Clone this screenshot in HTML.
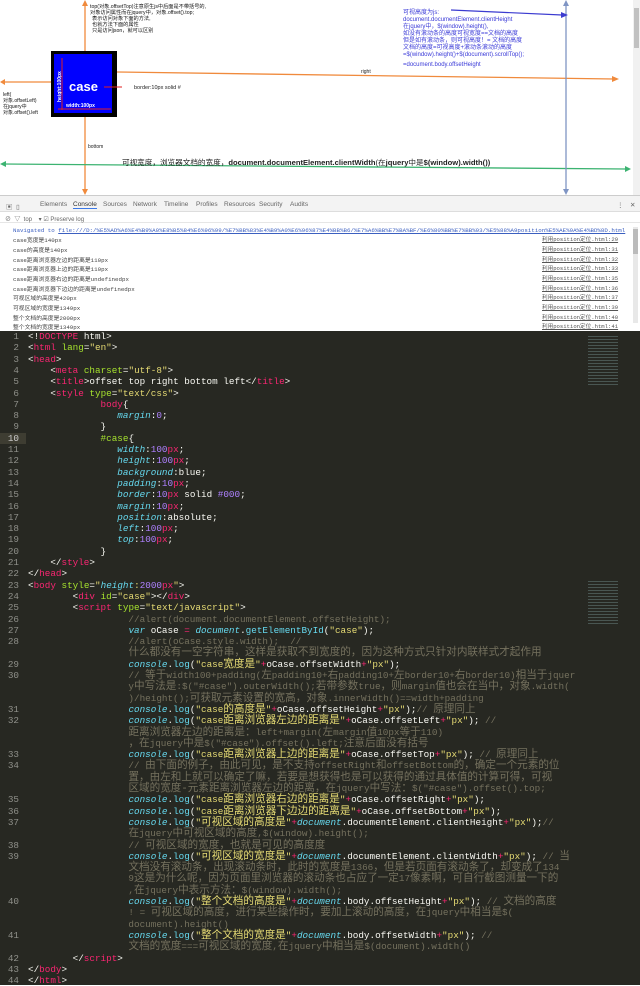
<!DOCTYPE html>
<html><head><meta charset="utf-8">
<style>
*{margin:0;padding:0;box-sizing:border-box}
body{width:640px;height:985px;overflow:hidden;background:#fff;font-family:"Liberation Sans","Noto Sans CJK SC",sans-serif;position:relative}
#top{position:absolute;left:0;top:0;width:640px;height:195px;background:#fff}
#dt{position:absolute;left:0;top:195px;width:640px;height:136px;background:#fff}
.tabs{height:17px;background:#f3f3f3;border-top:1px solid #ccc;border-bottom:1px solid #ddd;font-size:6.5px;color:#666;position:relative}
.tabs span{position:absolute;top:5px}
.filt{height:11px;border-bottom:1px solid #e6e6e6;font-size:6px;color:#666;position:relative}
.row{position:absolute;left:13px;font-family:"Liberation Mono","Noto Sans CJK SC",monospace;font-size:5.8px;color:#444;white-space:nowrap}
.lnk{position:absolute;left:542px;font-family:"Liberation Mono","Noto Sans CJK SC",monospace;font-size:5.6px;color:#555;text-decoration:underline;white-space:nowrap}
#ed{position:absolute;left:0;top:331px;width:640px;height:654px;background:#272822;font-family:"Liberation Mono","Noto Sans CJK SC",monospace;font-size:9.3px;color:#f8f8f2}
.l{position:absolute;left:0;height:11.3px;line-height:11.3px;white-space:pre;width:640px}
.n{position:absolute;left:0;width:19px;text-align:right;color:#8f908a}
.c{position:absolute;left:28px}
.z{font-size:10.6px}
.t{color:#f92672}.a{color:#a6e22e}.s{color:#e6db74}.m{color:#ae81ff}.p{color:#66d9ef;font-style:italic}.g{color:#75715e}.f{color:#66d9ef}
</style></head><body>
<div id="top">
<svg width="640" height="195" xmlns="http://www.w3.org/2000/svg">
<rect x="633" y="0" width="7" height="195" fill="#f1f1f1"/><rect x="634" y="8" width="5" height="40" fill="#c1c1c1"/>
<line x1="85" y1="2" x2="85" y2="193" stroke="#f08a3c" stroke-width="1.3"/>
<polygon points="82,6 88,6 85,0" fill="#f08a3c"/><polygon points="82,189 88,189 85,195" fill="#f08a3c"/>
<line x1="3" y1="82" x2="51" y2="82" stroke="#f08a3c" stroke-width="1.3"/><polygon points="0,82 5,79 5,85" fill="#f08a3c"/>
<line x1="117" y1="72" x2="614" y2="79" stroke="#f08a3c" stroke-width="1.3"/><polygon points="619,79 612,76 612,82" fill="#f08a3c"/>
<line x1="3" y1="164" x2="626" y2="169" stroke="#3cb371" stroke-width="1.3"/><polygon points="0,164 6,161 6,167" fill="#3cb371"/><polygon points="631,169 625,166 625,172" fill="#3cb371"/>
<line x1="566" y1="2" x2="566" y2="193" stroke="#7f95c4" stroke-width="1.3"/><polygon points="563,6 569,6 566,0" fill="#7f95c4"/><polygon points="563,189 569,189 566,195" fill="#7f95c4"/>
<line x1="451" y1="10" x2="562" y2="15" stroke="#3b3bd0" stroke-width="1.2"/><polygon points="568,15 561,12 561,18" fill="#3b3bd0"/>
<rect x="51" y="51" width="66" height="66" fill="#000"/><rect x="54" y="54" width="58" height="59" fill="#0000ff"/>
<text x="69" y="91" fill="#fff" font-size="13" font-weight="bold">case</text>
<text x="66" y="107" fill="#fff" font-size="5" font-weight="bold">width:100px</text>
<text x="61" y="102" fill="#fff" font-size="5" font-weight="bold" transform="rotate(-90 61 102)">height:100px</text>
<line x1="58" y1="109" x2="111" y2="109" stroke="#e02020" stroke-width="1"/><line x1="62" y1="58" x2="62" y2="110" stroke="#e02020" stroke-width="1"/>
<line x1="104" y1="87" x2="122" y2="87" stroke="#e02020" stroke-width="1"/>
<text x="134" y="89" fill="#222" font-size="5.5">border:10px solid #</text>
<text x="361" y="73" fill="#222" font-size="5">right</text>
<text x="88" y="148" fill="#222" font-size="5">bottom</text>
<g fill="#111" font-size="5"><text x="3" y="96">left(</text><text x="3" y="102">对象.offsetLeft)</text><text x="3" y="108">在jquery中</text><text x="3" y="114">对象.offset().left</text></g>
<g fill="#111" font-size="5.2"><text x="90" y="8">top(对象.offsetTop)注意原生js中后面是不带括号的,</text><text x="90" y="14">对象访问属性而在jquery中，对象.offset().top;</text><text x="92" y="20">表示访问对象下面的方法,</text><text x="92" y="26">也就方法下面的属性</text><text x="92" y="32">只是访问json，就可以区别</text></g>
<text x="122" y="165" fill="#222" font-size="7.6">可视宽度，浏览器文档的宽度，<tspan font-weight="bold">document.documentElement.clientWidth</tspan>(在<tspan font-weight="bold">jquery</tspan>中是<tspan font-weight="bold">$(window).width())</tspan></text>
<g fill="#3a3ad8" font-size="6"><text x="403" y="14">可视高度为js:</text><text x="403" y="21">document.documentElement.clientHeight</text><text x="403" y="28">在jquery中，$(window).height(),</text><text x="403" y="35">如没有滚动条的高度可视宽度==文档的高度</text><text x="403" y="42">但是如有滚动条，则可视高度！= 文档的高度</text><text x="403" y="49">文档的高度=可视高度+滚动条滚动的高度</text><text x="403" y="56">=$(window).height()+$(document).scrollTop();</text><text x="403" y="66">=document.body.offsetHeight</text></g>
</svg></div>
<div id="dt">
<div class="tabs"><span style="left:6px">▣ &nbsp;▯</span><span style="left:40px">Elements</span><span style="left:73px;color:#333;border-bottom:1px solid #3b78e7">Console</span><span style="left:103px">Sources</span><span style="left:133px">Network</span><span style="left:164px">Timeline</span><span style="left:196px">Profiles</span><span style="left:224px">Resources</span><span style="left:259px">Security</span><span style="left:290px">Audits</span><span style="left:617px">⋮</span><span style="left:630px">✕</span></div>
<div class="filt"><span style="position:absolute;left:5px;top:2px">⊘ &nbsp;▽ &nbsp;top &nbsp;&nbsp;&nbsp;▾ ☑ Preserve log</span></div>
<div class="row" style="top:32px;color:#3b5fc0">Navigated to <u>file:///D:/%E5%AD%A6%E4%B9%A0%E8%B5%84%E6%96%99/%E7%BB%83%E4%B9%A0%E6%96%87%E4%BB%B6/%E7%A6%BB%E7%BA%BF/%E6%80%BB%E7%BB%93/%E5%88%A9position%E5%AE%9A%E4%BD%8D.html</u></div>
<div class="row" style="top:40px">case宽度是140px</div><div class="lnk" style="top:40px">利用position定位.html:29</div>
<div class="row" style="top:50px">case的高度是140px</div><div class="lnk" style="top:50px">利用position定位.html:31</div>
<div class="row" style="top:60px">case距离浏览器左边的距离是110px</div><div class="lnk" style="top:60px">利用position定位.html:32</div>
<div class="row" style="top:69px">case距离浏览器上边的距离是110px</div><div class="lnk" style="top:69px">利用position定位.html:33</div>
<div class="row" style="top:79px">case距离浏览器右边的距离是undefinedpx</div><div class="lnk" style="top:79px">利用position定位.html:35</div>
<div class="row" style="top:89px">case距离浏览器下边边的距离是undefinedpx</div><div class="lnk" style="top:89px">利用position定位.html:36</div>
<div class="row" style="top:98px">可视区域的高度是420px</div><div class="lnk" style="top:98px">利用position定位.html:37</div>
<div class="row" style="top:108px">可视区域的宽度是1349px</div><div class="lnk" style="top:108px">利用position定位.html:39</div>
<div class="row" style="top:118px">整个文档的高度是2000px</div><div class="lnk" style="top:118px">利用position定位.html:40</div>
<div class="row" style="top:127px">整个文档的宽度是1349px</div><div class="lnk" style="top:127px">利用position定位.html:41</div>
<div style="position:absolute;left:633px;top:32px;width:5px;height:96px;background:#e8e8e8"></div><div style="position:absolute;left:633px;top:34px;width:5px;height:25px;background:#bbb"></div>
</div>
<div id="ed">
<div class="l" style="top:0px"><span class="n">1</span><span class="c">&lt;!<span class="t">DOCTYPE</span> html&gt;</span></div>
<div class="l" style="top:11.3px"><span class="n">2</span><span class="c">&lt;<span class="t">html</span> <span class="a">lang</span>=<span class="s">"en"</span>&gt;</span></div>
<div class="l" style="top:22.6px"><span class="n">3</span><span class="c">&lt;<span class="t">head</span>&gt;</span></div>
<div class="l" style="top:33.9px"><span class="n">4</span><span class="c">    &lt;<span class="t">meta</span> <span class="a">charset</span>=<span class="s">"utf-8"</span>&gt;</span></div>
<div class="l" style="top:45.2px"><span class="n">5</span><span class="c">    &lt;<span class="t">title</span>&gt;offset top right bottom left&lt;/<span class="t">title</span>&gt;</span></div>
<div class="l" style="top:56.5px"><span class="n">6</span><span class="c">    &lt;<span class="t">style</span> <span class="a">type</span>=<span class="s">"text/css"</span>&gt;</span></div>
<div class="l" style="top:67.8px"><span class="n">7</span><span class="c">             <span class="t">body</span>{</span></div>
<div class="l" style="top:79.1px"><span class="n">8</span><span class="c">                <span class="p">margin</span>:<span class="m">0</span>;</span></div>
<div class="l" style="top:90.4px"><span class="n">9</span><span class="c">             }</span></div>
<div class="l" style="top:101.7px;background:linear-gradient(90deg,#3e3d32 0,#3e3d32 26px,transparent 26px)"><span class="n" style="color:#ccc">10</span><span class="c">             <span class="a">#case</span>{</span></div>
<div class="l" style="top:113px"><span class="n">11</span><span class="c">                <span class="p">width</span>:<span class="m">100</span><span class="t">px</span>;</span></div>
<div class="l" style="top:124.3px"><span class="n">12</span><span class="c">                <span class="p">height</span>:<span class="m">100</span><span class="t">px</span>;</span></div>
<div class="l" style="top:135.6px"><span class="n">13</span><span class="c">                <span class="p">background</span>:blue;</span></div>
<div class="l" style="top:146.9px"><span class="n">14</span><span class="c">                <span class="p">padding</span>:<span class="m">10</span><span class="t">px</span>;</span></div>
<div class="l" style="top:158.2px"><span class="n">15</span><span class="c">                <span class="p">border</span>:<span class="m">10</span><span class="t">px</span> solid <span class="m">#000</span>;</span></div>
<div class="l" style="top:169.5px"><span class="n">16</span><span class="c">                <span class="p">margin</span>:<span class="m">10</span><span class="t">px</span>;</span></div>
<div class="l" style="top:180.8px"><span class="n">17</span><span class="c">                <span class="p">position</span>:absolute;</span></div>
<div class="l" style="top:192.1px"><span class="n">18</span><span class="c">                <span class="p">left</span>:<span class="m">100</span><span class="t">px</span>;</span></div>
<div class="l" style="top:203.4px"><span class="n">19</span><span class="c">                <span class="p">top</span>:<span class="m">100</span><span class="t">px</span>;</span></div>
<div class="l" style="top:214.7px"><span class="n">20</span><span class="c">             }</span></div>
<div class="l" style="top:226px"><span class="n">21</span><span class="c">    &lt;/<span class="t">style</span>&gt;</span></div>
<div class="l" style="top:237.3px"><span class="n">22</span><span class="c">&lt;/<span class="t">head</span>&gt;</span></div>
<div class="l" style="top:248.6px"><span class="n">23</span><span class="c">&lt;<span class="t">body</span> <span class="a">style</span>=<span class="s">"<span class="p">height</span>:<span class="m">2000</span><span class="t">px</span>"</span>&gt;</span></div>
<div class="l" style="top:259.9px"><span class="n">24</span><span class="c">        &lt;<span class="t">div</span> <span class="a">id</span>=<span class="s">"case"</span>&gt;&lt;/<span class="t">div</span>&gt;</span></div>
<div class="l" style="top:271.2px"><span class="n">25</span><span class="c">        &lt;<span class="t">script</span> <span class="a">type</span>=<span class="s">"text/javascript"</span>&gt;</span></div>
<div class="l" style="top:282.5px"><span class="n">26</span><span class="c g">                  //alert(document.documentElement.offsetHeight);</span></div>
<div class="l" style="top:293.8px"><span class="n">27</span><span class="c">                  <span class="p">var</span> oCase <span class="t">=</span> <span class="p">document</span>.<span class="f">getElementById</span>(<span class="s">"case"</span>);</span></div>
<div class="l" style="top:305.1px"><span class="n">28</span><span class="c g">                  //alert(oCase.style.width);  //</span></div>
<div class="l" style="top:316.4px"><span class="c g">                  <span class="z">什么都没有一空字符串，这样是获取不到宽度的，因为这种方式只针对内联样式才起作用</span></span></div>
<div class="l" style="top:327.7px"><span class="n">29</span><span class="c">                  <span class="p">console</span>.<span class="f">log</span>(<span class="s">"case<span class="z">宽度是</span>"</span><span class="t">+</span>oCase.offsetWidth<span class="t">+</span><span class="s">"px"</span>);</span></div>
<div class="l" style="top:339px"><span class="n">30</span><span class="c g">                  // <span class="z">等于</span>width100+padding(<span class="z">左</span>padding10+<span class="z">右</span>padding10+<span class="z">左</span>border10+<span class="z">右</span>border10)<span class="z">相当于</span>jquer</span></div>
<div class="l" style="top:350.3px"><span class="c g">                  y<span class="z">中写法是</span>:$("#case").outerWidth();<span class="z">若带参数</span>true<span class="z">，则</span>margin<span class="z">值也会在当中，对象</span>.width(</span></div>
<div class="l" style="top:361.6px"><span class="c g">                  )/height();<span class="z">可获取元素设置的宽高，对象</span>.innerWidth()==width+padding</span></div>
<div class="l" style="top:372.9px"><span class="n">31</span><span class="c">                  <span class="p">console</span>.<span class="f">log</span>(<span class="s">"case<span class="z">的高度是</span>"</span><span class="t">+</span>oCase.offsetHeight<span class="t">+</span><span class="s">"px"</span>);<span class="g">// <span class="z">原理同上</span></span></span></div>
<div class="l" style="top:384.2px"><span class="n">32</span><span class="c">                  <span class="p">console</span>.<span class="f">log</span>(<span class="s">"case<span class="z">距离浏览器左边的距离是</span>"</span><span class="t">+</span>oCase.offsetLeft<span class="t">+</span><span class="s">"px"</span>); <span class="g">//</span></span></div>
<div class="l" style="top:395.5px"><span class="c g">                  <span class="z">距离浏览器左边的距离是：</span>left+margin(<span class="z">左</span>margin<span class="z">值</span>10px<span class="z">等于</span>110)</span></div>
<div class="l" style="top:406.8px"><span class="c g">                  <span class="z">，在</span>jquery<span class="z">中是</span>$("#case").offset().left;<span class="z">注意后面没有括号</span></span></div>
<div class="l" style="top:418.1px"><span class="n">33</span><span class="c">                  <span class="p">console</span>.<span class="f">log</span>(<span class="s">"case<span class="z">距离浏览器上边的距离是</span>"</span><span class="t">+</span>oCase.offsetTop<span class="t">+</span><span class="s">"px"</span>); <span class="g">// <span class="z">原理同上</span></span></span></div>
<div class="l" style="top:429.4px"><span class="n">34</span><span class="c g">                  // <span class="z">由下面的例子，由此可见，是不支持</span>offsetRight<span class="z">和</span>offsetBottom<span class="z">的，确定一个元素的位</span></span></div>
<div class="l" style="top:440.7px"><span class="c g">                  <span class="z">置，由左和上就可以确定了嘛，若要是想获得也是可以获得的通过具体值的计算可得，可视</span></span></div>
<div class="l" style="top:452px"><span class="c g">                  <span class="z">区域的宽度-元素距离浏览器左边的距离，在</span>jquery<span class="z">中写法：</span>$("#case").offset().top;</span></div>
<div class="l" style="top:463.3px"><span class="n">35</span><span class="c">                  <span class="p">console</span>.<span class="f">log</span>(<span class="s">"case<span class="z">距离浏览器右边的距离是</span>"</span><span class="t">+</span>oCase.offsetRight<span class="t">+</span><span class="s">"px"</span>);</span></div>
<div class="l" style="top:474.6px"><span class="n">36</span><span class="c">                  <span class="p">console</span>.<span class="f">log</span>(<span class="s">"case<span class="z">距离浏览器下边边的距离是</span>"</span><span class="t">+</span>oCase.offsetBottom<span class="t">+</span><span class="s">"px"</span>);</span></div>
<div class="l" style="top:485.9px"><span class="n">37</span><span class="c">                  <span class="p">console</span>.<span class="f">log</span>(<span class="s">"<span class="z">可视区域的高度是</span>"</span><span class="t">+</span><span class="p">document</span>.documentElement.clientHeight<span class="t">+</span><span class="s">"px"</span>);<span class="g">//</span></span></div>
<div class="l" style="top:497.2px"><span class="c g">                  <span class="z">在</span>jquery<span class="z">中可视区域的高度</span>,$(window).height();</span></div>
<div class="l" style="top:508.5px"><span class="n">38</span><span class="c g">                  // <span class="z">可视区域的宽度，也就是可见的高度度</span></span></div>
<div class="l" style="top:519.8px"><span class="n">39</span><span class="c">                  <span class="p">console</span>.<span class="f">log</span>(<span class="s">"<span class="z">可视区域的宽度是</span>"</span><span class="t">+</span><span class="p">document</span>.documentElement.clientWidth<span class="t">+</span><span class="s">"px"</span>); <span class="g">// <span class="z">当</span></span></span></div>
<div class="l" style="top:531.1px"><span class="c g">                  <span class="z">文档没有滚动条，出现滚动条时，此时的宽度是</span>1366<span class="z">，但是若页面有滚动条了，却变成了</span>134</span></div>
<div class="l" style="top:542.4px"><span class="c g">                  9<span class="z">这是为什么呢，因为页面里浏览器的滚动条也占应了一定</span>17<span class="z">像素啊，可自行截图测量一下的</span></span></div>
<div class="l" style="top:553.7px"><span class="c g">                  ,<span class="z">在</span>jquery<span class="z">中表示方法：</span>$(window).width();</span></div>
<div class="l" style="top:565px"><span class="n">40</span><span class="c">                  <span class="p">console</span>.<span class="f">log</span>(<span class="s">"<span class="z">整个文档的高度是</span>"</span><span class="t">+</span><span class="p">document</span>.body.offsetHeight<span class="t">+</span><span class="s">"px"</span>); <span class="g">// <span class="z">文档的高度</span></span></span></div>
<div class="l" style="top:576.3px"><span class="c g">                  ! = <span class="z">可视区域的高度，进行某些操作时，要加上滚动的高度，在</span>jquery<span class="z">中相当是</span>$(</span></div>
<div class="l" style="top:587.6px"><span class="c g">                  document).height()</span></div>
<div class="l" style="top:598.9px"><span class="n">41</span><span class="c">                  <span class="p">console</span>.<span class="f">log</span>(<span class="s">"<span class="z">整个文档的宽度是</span>"</span><span class="t">+</span><span class="p">document</span>.body.offsetWidth<span class="t">+</span><span class="s">"px"</span>); <span class="g">//</span></span></div>
<div class="l" style="top:610.2px"><span class="c g">                  <span class="z">文档的宽度</span>===<span class="z">可视区域的宽度</span>,<span class="z">在</span>jquery<span class="z">中相当是</span>$(document).width()</span></div>
<div class="l" style="top:621.5px"><span class="n">42</span><span class="c">        &lt;/<span class="t">script</span>&gt;</span></div>
<div class="l" style="top:632.8px"><span class="n">43</span><span class="c">&lt;/<span class="t">body</span>&gt;</span></div>
<div class="l" style="top:644.1px"><span class="n">44</span><span class="c">&lt;/<span class="t">html</span>&gt;</span></div>
<div style="position:absolute;left:588px;top:5px;width:30px;height:50px;opacity:.35;background:repeating-linear-gradient(#8aa 0 1px,transparent 1px 3px)"></div>
<div style="position:absolute;left:588px;top:250px;width:30px;height:45px;opacity:.35;background:repeating-linear-gradient(#8aa 0 1px,transparent 1px 3px)"></div>
</div>
</body></html>
